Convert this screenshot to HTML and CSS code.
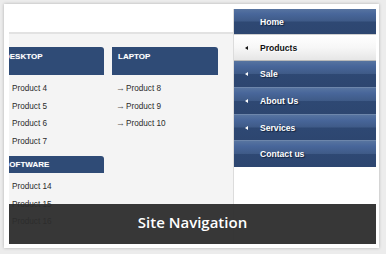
FILE: index.html
```html
<!DOCTYPE html>
<html>
<head>
<meta charset="utf-8">
<link rel="stylesheet" href="styles.css">
</head>
<body>
<div class="card">
  <div class="stage">
    <div class="panel">
      <div class="panel-top"></div>
      <div class="mega">
        <div class="col">
          <div class="head tall">DESKTOP</div>
          <ul class="list">
            <li>Product 4</li>
            <li>Product 5</li>
            <li>Product 6</li>
            <li>Product 7</li>
          </ul>
          <div class="head short">SOFTWARE</div>
          <ul class="list">
            <li>Product 14</li>
            <li>Product 15</li>
            <li>Product 16</li>
          </ul>
        </div>
        <div class="col">
          <div class="head tall">LAPTOP</div>
          <ul class="list arrows">
            <li><span class="arr">→</span>Product 8</li>
            <li><span class="arr">→</span>Product 9</li>
            <li><span class="arr">→</span>Product 10</li>
          </ul>
        </div>
      </div>
    </div>
    <ul class="nav">
      <li class="item"><span class="tri none"></span>Home</li>
      <li class="item active"><span class="tri"></span>Products</li>
      <li class="item"><span class="tri"></span>Sale</li>
      <li class="item"><span class="tri"></span>About Us</li>
      <li class="item"><span class="tri"></span>Services</li>
      <li class="item"><span class="tri none"></span>Contact us</li>
    </ul>
    <div class="caption">Site Navigation</div>
  </div>
</div>
</body>
</html>
```

FILE: styles.css
```css
html, body {
  margin: 0;
  padding: 0;
}
body {
  background: #ececec;
  width: 386px;
  height: 254px;
  overflow: hidden;
  font-family: "Liberation Sans", Arial, sans-serif;
}
.card {
  margin: 4px 0 0 4px;
  width: 367px;
  height: 235px;
  padding: 5px 3px 4px 5px;
  background: #fff;
  box-shadow: 0 0 3px rgba(0,0,0,0.25);
}
.stage {
  position: relative;
  width: 367px;
  height: 235px;
  overflow: hidden;
  display: flex;
  background: #fff;
}
.panel {
  width: 224px;
  border-right: 1px solid #dcdcdc;
  background: #f4f4f4;
  display: flex;
  flex-direction: column;
}
.panel-top {
  height: 23px;
  background: #fff;
  border-bottom: 2px solid #e2e2e2;
}
.mega {
  display: flex;
  gap: 8px;
  margin-left: -11px;
  padding-top: 13px;
}
.col {
  width: 106px;
}
.head {
  background: #2f4b76;
  color: #fff;
  font-weight: bold;
  font-size: 8px;
  padding-left: 6px;
  border-radius: 0 3px 0 0;
  box-sizing: border-box;
  text-shadow: 0 0 1px rgba(255,255,255,0.3);
}
.head.tall {
  height: 28px;
  padding-top: 5px;
  line-height: 9px;
}
.head.short {
  height: 17px;
  line-height: 17px;
  margin-top: 6px;
}
.list {
  list-style: none;
  margin: 0;
  padding: 5px 0 0 14px;
}
.list li {
  font-size: 8.2px;
  color: #2b2b2b;
  height: 17.5px;
  line-height: 17.5px;
}
.list.arrows {
  padding-left: 4px;
}
.arr {
  display: inline-block;
  width: 10px;
  font-size: 9px;
  color: #555;
}
.nav {
  list-style: none;
  margin: 0;
  padding: 0;
  width: 142px;
  align-self: flex-start;
}
.item {
  height: 25.8px;
  border-top: 1px solid #6d86ab;
  box-sizing: content-box;
  display: flex;
  align-items: center;
  padding-left: 11px;
  font-size: 8.6px;
  font-weight: bold;
  color: #fff;
  text-shadow: 1px 1px 1px #13233d;
  background: linear-gradient(#5774a0 0%, #48669a 20%, #3f5b88 48%, #2e4873 52%, #2d4670 100%);
}
.item:first-child {
  border-top: 0;
  height: 25.3px;
}
.item.active {
  background: linear-gradient(#ffffff 0%, #f7f7f7 50%, #e6e6e6 100%);
  color: #111;
  text-shadow: 1px 1px 0 #fff;
  border-top: 1px solid #cfcfcf;
  border-bottom: 1px solid #b9b9b9;
  height: 24.8px;
}
.item.active + .item {
  border-top: 0;
}
.tri {
  display: inline-block;
  width: 0;
  height: 0;
  border-top: 2.5px solid transparent;
  border-bottom: 2.5px solid transparent;
  border-right: 3px solid #fff;
  margin-right: 12px;
}
.active .tri {
  border-right-color: #111;
}
.tri.none {
  border-right-color: transparent;
}
.caption {
  position: absolute;
  left: 0;
  right: 0;
  bottom: 0;
  height: 40px;
  background: rgba(44,44,44,0.95);
  color: #fff;
  font-family: "Open Sans", sans-serif;
  font-weight: 600;
  font-size: 15px;
  line-height: 36px;
  text-align: center;
}
```
